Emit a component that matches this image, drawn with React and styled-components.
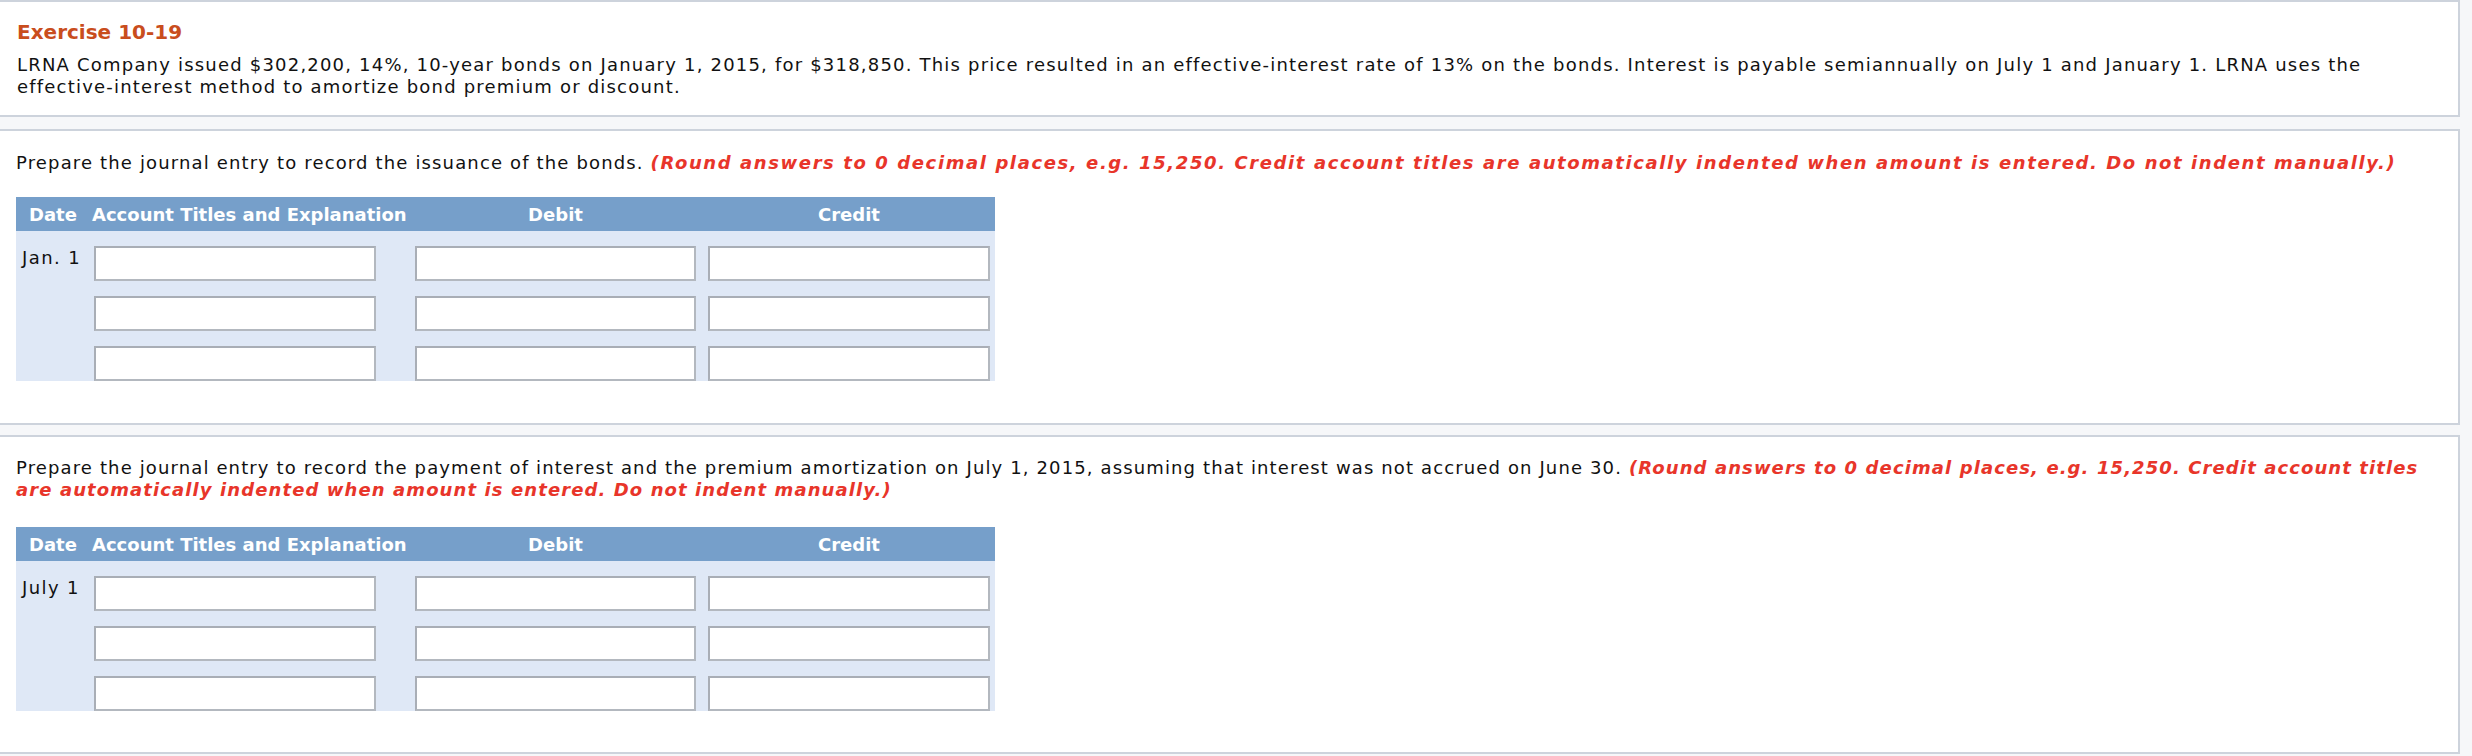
import React from "react";
import styled, { createGlobalStyle } from "styled-components";

const Global = createGlobalStyle`
  html, body { margin: 0; padding: 0; }
  body {
    background: #f6f7f9;
    font-family: "DejaVu Sans", Verdana, sans-serif;
    color: #111;
    width: 2472px;
    height: 756px;
    overflow: hidden;
  }
`;

const Page = styled.div`
  display: flex;
  flex-direction: column;
`;

const Panel = styled.section`
  box-sizing: border-box;
  width: 2460px;
  background: #fff;
  border: 2px solid #cdd3dc;
  border-left: none;
  margin-top: ${(p) => p.$gap || 0}px;
  padding: ${(p) => p.$pad};
`;

const Title = styled.h2`
  margin: 0;
  font-size: 20px;
  line-height: 24px;
  font-weight: bold;
  color: #c94d1d;
`;

const Text = styled.p`
  margin: ${(p) => p.$mt || 0}px 0 0 0;
  font-size: 18px;
  line-height: 22px;
  letter-spacing: ${(p) => p.$ls || 1.2}px;
  white-space: nowrap;
`;

const Note = styled.em`
  color: #e8352a;
  font-weight: bold;
  font-style: italic;
  letter-spacing: ${(p) => p.$ls || 1.6}px;
`;

const COLS = "78px 321px 293px 282px 5px";

const Table = styled.div`
  width: 979px;
  margin-top: ${(p) => p.$mt}px;
`;

const HeadRow = styled.div`
  display: grid;
  grid-template-columns: ${COLS};
  height: 34px;
  align-items: center;
  background: #769fca;
  color: #fff;
  font-size: 18px;
  font-weight: bold;
  line-height: 22px;
  padding-top: 2px;
  box-sizing: border-box;
`;

const HeadCell = styled.div`
  white-space: nowrap;
  padding-left: ${(p) => p.$pl || 0}px;
  margin-left: ${(p) => p.$ml || 0}px;
  width: ${(p) => (p.$w ? p.$w + "px" : "auto")};
  text-align: ${(p) => p.$align || "left"};
`;

const Body = styled.div`
  background: #dfe8f6;
  padding-top: 15px;
  display: flex;
  flex-direction: column;
  gap: 15px;
`;

const Row = styled.div`
  display: grid;
  grid-template-columns: ${COLS};
  align-items: start;
`;

const DateCell = styled.div`
  font-size: 18px;
  line-height: 22px;
  letter-spacing: 1.4px;
  padding: 1px 0 0 6px;
  white-space: nowrap;
`;

const Input = styled.input`
  box-sizing: border-box;
  width: ${(p) => p.$w}px;
  height: 35px;
  margin: 0;
  background: #fff;
  border: 2px solid #b3b8bf;
  border-top-color: #a9aeb6;
  border-left-color: #a9aeb6;
  padding: 0 6px;
  font-family: inherit;
  font-size: 18px;
  outline: none;
`;

function Journal({ date, mt }) {
  const rows = [date, "", ""];
  return (
    <Table $mt={mt}>
      <HeadRow>
        <HeadCell $pl={13}>Date</HeadCell>
        <HeadCell $ml={-2}>Account Titles and Explanation</HeadCell>
        <HeadCell $w={281} $align="center">Debit</HeadCell>
        <HeadCell $w={282} $align="center">Credit</HeadCell>
        <span />
      </HeadRow>
      <Body>
        {rows.map((d, i) => (
          <Row key={i}>
            <DateCell>{d}</DateCell>
            <Input $w={282} />
            <Input $w={281} />
            <Input $w={282} />
            <span />
          </Row>
        ))}
      </Body>
    </Table>
  );
}

export default function App() {
  return (
    <>
      <Global />
      <Page>
        <Panel $pad="18px 0 17px 17px">
          <Title>Exercise 10-19</Title>
          <Text $mt={10}>
            LRNA Company issued $302,200, 14%, 10-year bonds on January 1, 2015, for $318,850. This price resulted in an effective-interest rate of 13% on the bonds. Interest is payable semiannually on July 1 and January 1. LRNA uses the
            <br />
            effective-interest method to amortize bond premium or discount.
          </Text>
        </Panel>
        <Panel $gap={12} $pad="21px 0 42px 16px">
          <Text $ls={1.15}>
            Prepare the journal entry to record the issuance of the bonds.{" "}
            <Note>
              (Round answers to 0 decimal places, e.g. 15,250. Credit account titles are automatically indented when amount is entered. Do not indent manually.)
            </Note>
          </Text>
          <Journal date="Jan. 1" mt={23} />
        </Panel>
        <Panel $gap={10} $pad="20px 0 41px 16px">
          <Text $ls={1.13}>
            Prepare the journal entry to record the payment of interest and the premium amortization on July 1, 2015, assuming that interest was not accrued on June 30.{" "}
            <Note $ls={1.1}>
              (Round answers to 0 decimal places, e.g. 15,250. Credit account titles
              <br />
              are automatically indented when amount is entered. Do not indent manually.)
            </Note>
          </Text>
          <Journal date="July 1" mt={26} />
        </Panel>
      </Page>
    </>
  );
}
